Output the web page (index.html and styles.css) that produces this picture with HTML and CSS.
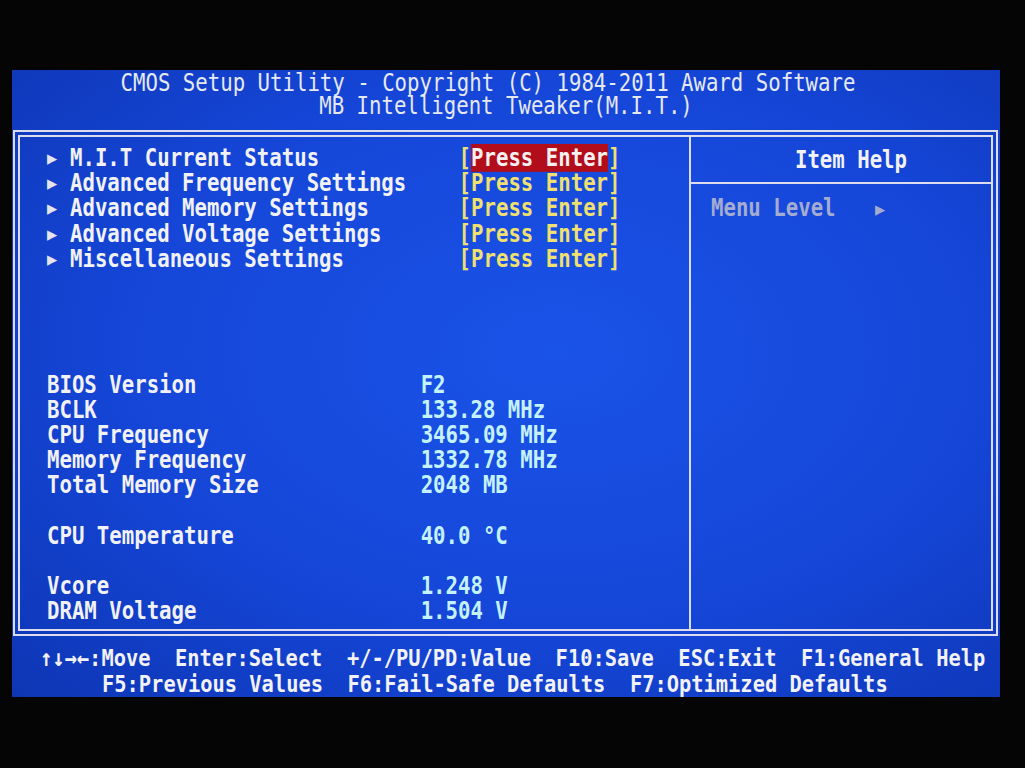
FILE: index.html
```html
<!DOCTYPE html>
<html lang="en">
<head>
  <meta charset="UTF-8" />
  <title>CMOS Setup Utility</title>
  <link rel="stylesheet" href="styles.css">
</head>
<body>

  <div class="screen">
    <div class="title">
      <div class="title-line first"><span class="tall">CMOS Setup Utility - Copyright (C) 1984-2011 Award Software</span></div>
      <div class="title-line"><span class="tall">MB Intelligent Tweaker(M.I.T.)</span></div>
    </div>

    <div class="frame">
      <div class="main-panel">
        <div class="row menu-row"><span class="arrow">&#9654;</span><span class="label tall">M.I.T Current Status</span><span class="enter tall">[<span class="selected">Press Enter</span>]</span></div>
        <div class="row menu-row"><span class="arrow">&#9654;</span><span class="label tall">Advanced Frequency Settings</span><span class="enter tall">[Press Enter]</span></div>
        <div class="row menu-row"><span class="arrow">&#9654;</span><span class="label tall">Advanced Memory Settings</span><span class="enter tall">[Press Enter]</span></div>
        <div class="row menu-row"><span class="arrow">&#9654;</span><span class="label tall">Advanced Voltage Settings</span><span class="enter tall">[Press Enter]</span></div>
        <div class="row menu-row"><span class="arrow">&#9654;</span><span class="label tall">Miscellaneous Settings</span><span class="enter tall">[Press Enter]</span></div>

        <div class="spacer-rows"></div>

        <div class="row info-row"><span class="info-label tall">BIOS Version</span><span class="info-value tall">F2</span></div>
        <div class="row info-row"><span class="info-label tall">BCLK</span><span class="info-value tall">133.28 MHz</span></div>
        <div class="row info-row"><span class="info-label tall">CPU Frequency</span><span class="info-value tall">3465.09 MHz</span></div>
        <div class="row info-row"><span class="info-label tall">Memory Frequency</span><span class="info-value tall">1332.78 MHz</span></div>
        <div class="row info-row"><span class="info-label tall">Total Memory Size</span><span class="info-value tall">2048 MB</span></div>
        <div class="row"></div>
        <div class="row info-row"><span class="info-label tall">CPU Temperature</span><span class="info-value tall">40.0 &deg;C</span></div>
        <div class="row"></div>
        <div class="row info-row"><span class="info-label tall">Vcore</span><span class="info-value tall">1.248 V</span></div>
        <div class="row info-row"><span class="info-label tall">DRAM Voltage</span><span class="info-value tall">1.504 V</span></div>
      </div>

      <div class="help-panel">
        <div class="help-title"><span class="tall">Item Help</span></div>
        <div class="help-body"><span class="menu-level tall">Menu Level</span><span class="menu-arrow">&#9654;</span></div>
      </div>
    </div>

    <div class="footer">
      <div class="footer-line first"><span class="tall">&uarr;&darr;&rarr;&larr;:Move  Enter:Select  +/-/PU/PD:Value  F10:Save  ESC:Exit  F1:General Help</span></div>
      <div class="footer-line second"><span class="tall">F5:Previous Values  F6:Fail-Safe Defaults  F7:Optimized Defaults</span></div>
    </div>
  </div>

</body>
</html>
```

FILE: styles.css
```css
body {
  margin: 0;
  padding: 0;
  background-color: #050505;
  font-family: "DejaVu Sans Mono", "Liberation Mono", monospace;
  font-size: 20.7px;
}

.screen {
  width: 988px;
  height: 627px;
  margin: 70px 0 0 12px;
  background: radial-gradient(ellipse at 55% 45%, #1a53e8 0%, #1546d8 55%, #0e36b4 100%);
  color: #f2f2f6;
  display: flex;
  flex-direction: column;
  overflow: hidden;
}

/* BIOS glyphs are taller than the mono fonts we have */
.tall {
  display: inline-block;
  transform: scaleY(1.16);
}

.title {
  flex-shrink: 0;
  height: 60px;
  padding-top: 2px;
  box-sizing: border-box;
  line-height: 23px;
  color: #e6e8f2;
  text-align: center;
}

.title-line.first {
  padding-right: 36px;
}

.frame {
  flex-shrink: 0;
  margin-left: 1px;
  width: 971px;
  height: 492px;
  border: 7px double #dcdcec;
  display: flex;
}

.main-panel {
  width: 671px;
  border-right: 2px solid #dcdcec;
  padding: 9px 0 0 27px;
  box-sizing: border-box;
  font-weight: bold;
}

.row {
  height: 25.2px;
  line-height: 25.2px;
  display: flex;
  white-space: pre;
}

.arrow {
  width: 23px;
  font-size: 17px;
  color: #e4e4ec;
}

.menu-row .label {
  width: 31.2ch;
}

.enter {
  color: #f0e070;
}

.selected {
  background-color: #b20d1a;
  color: #f6f0f0;
}

.spacer-rows {
  height: 100.8px;
}

.info-label {
  width: 30ch;
}

.info-value {
  color: #c4f2ff;
}

.help-panel {
  flex: 1;
  display: flex;
  flex-direction: column;
  font-weight: bold;
}

.help-title {
  height: 47px;
  line-height: 46px;
  padding-left: 20px;
  text-align: center;
  border-bottom: 2px solid #dcdcec;
  box-sizing: border-box;
}

.help-body {
  padding: 12px 0 0 20px;
  color: #a4acd0;
  white-space: nowrap;
  line-height: 25px;
}

.menu-level {
  width: 164px;
}

.menu-arrow {
  font-size: 17px;
}

.footer {
  flex-shrink: 0;
  padding-top: 9px;
  line-height: 26px;
  font-size: 20.4px;
  font-weight: bold;
  color: #f2f2f8;
}

.footer-line {
  white-space: pre;
}

.footer-line.first {
  padding-left: 28px;
}

.footer-line.second {
  padding-left: 90px;
}
```
